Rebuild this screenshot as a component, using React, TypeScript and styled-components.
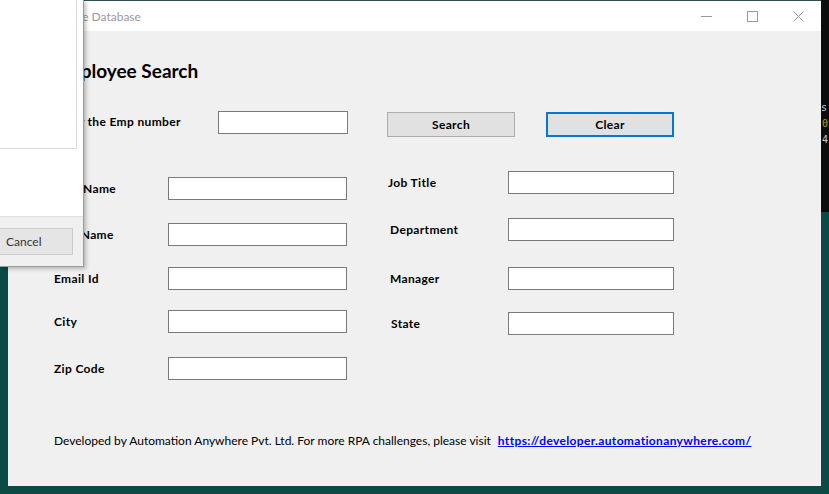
import React from "react";
import styled, { createGlobalStyle } from "styled-components";

const GlobalStyle = createGlobalStyle`
  html, body { margin: 0; padding: 0; }
  body { font-family: Lato, "Liberation Sans", sans-serif; font-size: 12px; color: #000; }
  #root { width: 829px; height: 494px; overflow: hidden; }
`;

const Desktop = styled.div`
  position: relative;
  width: 829px;
  height: 494px;
  background: #0a4c45;
  display: grid;
  grid-template-columns: 8px 813px 8px;
  grid-template-rows: 486px 8px;
  overflow: hidden;
`;

const Terminal = styled.div`
  grid-column: 3;
  grid-row: 1;
  height: 212px;
  background: #0c0c0c;
  display: flex;
  flex-direction: column;
  padding-top: 100px;
  box-sizing: border-box;
  font-family: "DejaVu Sans Mono", monospace;
  font-size: 10px;
  line-height: 16px;
  overflow: hidden;
`;

const TermChar = styled.span<{ $color: string; $indent: number }>`
  color: ${(p) => p.$color};
  padding-left: ${(p) => p.$indent}px;
  white-space: pre;
`;

const Window = styled.div`
  grid-column: 2;
  grid-row: 1;
  display: flex;
  flex-direction: column;
  border-top: 1px solid #2f4f4c;
  background: #f0f0f0;
  box-sizing: border-box;
`;

const TitleBar = styled.div`
  height: 30px;
  background: #fff;
  display: flex;
  align-items: center;
  flex: none;
`;

const TitleText = styled.div`
  flex: 1;
  padding-left: 29px;
  color: #999;
  font-size: 12px;
  font-family: Lato, sans-serif;
`;

const CaptionButton = styled.div`
  width: 46px;
  height: 30px;
  display: flex;
  align-items: center;
  justify-content: center;
`;

const Content = styled.div`
  flex: 1;
  display: flex;
  flex-direction: column;
  padding-left: 46px;
`;

const Heading = styled.h1`
  margin: 27px 0 0 0;
  height: 26px;
  line-height: 26px;
  font-size: 19px;
  font-weight: 700;
  font-family: Lato, sans-serif;
`;

const SearchRow = styled.div`
  margin-top: 27px;
  display: flex;
  align-items: flex-start;
`;

const Label = styled.div<{ $width: number; $indent?: number }>`
  width: ${(p) => p.$width}px;
  padding-left: ${(p) => p.$indent ?? 0}px;
  box-sizing: border-box;
  font-weight: 700;
  letter-spacing: 0.35px;
  line-height: 22px;
  flex: none;
  white-space: nowrap;
`;

const TextBox = styled.div<{ $width: number }>`
  width: ${(p) => p.$width}px;
  height: 23px;
  box-sizing: border-box;
  background: #fff;
  border: 1px solid #7a7a7a;
  flex: none;
`;

const Button = styled.button<{ $focused?: boolean; $ml: number }>`
  margin-left: ${(p) => p.$ml}px;
  margin-top: 1px;
  width: 128px;
  height: 25px;
  box-sizing: border-box;
  background: #e1e1e1;
  border: ${(p) => (p.$focused ? "2px solid #0078d7" : "1px solid #adadad")};
  font-family: Lato, sans-serif;
  font-size: 12px;
  font-weight: 700;
  letter-spacing: 0.35px;
  color: #000;
  padding: 0;
  display: flex;
  align-items: center;
  justify-content: center;
`;

const Fields = styled.div`
  margin-top: 34px;
  display: flex;
  align-items: flex-start;
  gap: 41px;
`;

const Column = styled.div`
  display: flex;
  flex-direction: column;
`;

const FieldRow = styled.div<{ $mt: number }>`
  margin-top: ${(p) => p.$mt}px;
  display: flex;
  align-items: center;
  height: 23px;
`;

const Footer = styled.div`
  margin-top: 53px;
  display: flex;
  align-items: center;
  line-height: 16px;
  white-space: nowrap;
`;

const Link = styled.a`
  margin-left: 7px;
  color: #0000ff;
  font-weight: 700;
  letter-spacing: 0.35px;
  text-decoration: underline;
`;

/* overlapping dialog window on the left */
const Dialog = styled.div`
  position: absolute;
  left: 0;
  top: 0;
  width: 83px;
  height: 266px;
  display: flex;
  flex-direction: column;
  background: #fff;
  border-right: 1px solid #9a9a9a;
  border-bottom: 1px solid #9a9a9a;
  box-shadow: 2px 2px 4px rgba(0, 0, 0, 0.25);
  overflow: hidden;
`;

const DialogBody = styled.div`
  height: 217px;
  flex: none;
  border-bottom: 1px solid #dfdfdf;
  box-sizing: border-box;
`;

const ListBox = styled.div`
  margin-left: -2px;
  width: 79px;
  height: 149px;
  box-sizing: border-box;
  border-right: 1px solid #dcdcdc;
  border-bottom: 1px solid #dcdcdc;
  background: #fff;
`;

const DialogFooter = styled.div`
  flex: 1;
  background: #f0f0f0;
  padding-top: 11px;
`;

const CancelButton = styled.div`
  margin-left: -4px;
  width: 77px;
  height: 27px;
  box-sizing: border-box;
  border: 1px solid #cccccc;
  background: #e5e5e5;
  display: flex;
  align-items: center;
  padding-left: 9px;
  font-family: Lato, sans-serif;
  font-size: 12px;
  color: #333;
`;

const leftFields: [string, number][] = [
  ["First Name", 6],
  ["Last Name", 23],
  ["Email Id", 21],
  ["City", 20],
  ["Zip Code", 24],
];
const rightFields: [string, number, number][] = [
  ["Job Title", 0, 0],
  ["Department", 24, 2],
  ["Manager", 26, 2],
  ["State", 22, 3],
];

export default function App() {
  return (
    <>
      <GlobalStyle />
      <Desktop>
        <Window>
          <TitleBar>
            <TitleText>Employee Database</TitleText>
            <CaptionButton>
              <svg width="11" height="11" viewBox="0 0 11 11">
                <line x1="0" y1="5.5" x2="11" y2="5.5" stroke="#999" strokeWidth="1" />
              </svg>
            </CaptionButton>
            <CaptionButton>
              <svg width="11" height="11" viewBox="0 0 11 11">
                <rect x="0.5" y="0.5" width="10" height="10" fill="none" stroke="#999" strokeWidth="1" />
              </svg>
            </CaptionButton>
            <CaptionButton>
              <svg width="11" height="11" viewBox="0 0 11 11">
                <path d="M0.5 0.5 L10.5 10.5 M10.5 0.5 L0.5 10.5" stroke="#999" strokeWidth="1" />
              </svg>
            </CaptionButton>
          </TitleBar>
          <Content>
            <Heading>Employee Search</Heading>
            <SearchRow>
              <Label $width={164}>Enter the Emp number</Label>
              <TextBox $width={130} />
              <Button $ml={39}>Search</Button>
              <Button $ml={31} $focused>Clear</Button>
            </SearchRow>
            <Fields>
              <Column>
                {leftFields.map(([label, mt]) => (
                  <FieldRow key={label} $mt={mt}>
                    <Label $width={114}>{label}</Label>
                    <TextBox $width={179} />
                  </FieldRow>
                ))}
              </Column>
              <Column>
                {rightFields.map(([label, mt, indent]) => (
                  <FieldRow key={label} $mt={mt}>
                    <Label $width={120} $indent={indent}>{label}</Label>
                    <TextBox $width={166} />
                  </FieldRow>
                ))}
              </Column>
            </Fields>
            <Footer>
              <span>Developed by Automation Anywhere Pvt. Ltd. For more RPA challenges, please visit</span>
              <Link href="#">https://developer.automationanywhere.com/</Link>
            </Footer>
          </Content>
        </Window>
        <Terminal>
          <TermChar $color="#cccccc" $indent={0}>s</TermChar>
          <TermChar $color="#c19c00" $indent={1}>0</TermChar>
          <TermChar $color="#cccccc" $indent={1}>4</TermChar>
        </Terminal>
        <Dialog>
          <DialogBody>
            <ListBox />
          </DialogBody>
          <DialogFooter>
            <CancelButton>Cancel</CancelButton>
          </DialogFooter>
        </Dialog>
      </Desktop>
    </>
  );
}
